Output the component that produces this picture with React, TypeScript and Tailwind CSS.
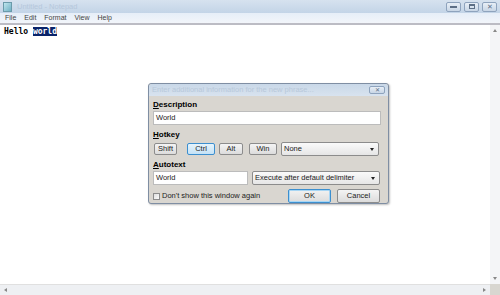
import React from "react";

const f = { fontFamily: '"Liberation Sans", Arial, sans-serif' };

function WinBtn({ children }: { children: React.ReactNode }) {
  return (
    <div className="w-[15px] h-[10px] border border-[#8ea3bd] rounded-[2px] bg-gradient-to-b from-[#e8eff7] to-[#c8d6e6] flex items-center justify-center">
      {children}
    </div>
  );
}

function Btn({ label, active, w }: { label: string; active?: boolean; w: string }) {
  return (
    <div
      className={`${w} h-[12px] rounded-[2px] border flex items-center justify-center text-[7.5px] text-[#222] ${
        active
          ? "border-[#3c8fcf] bg-gradient-to-b from-[#e6f3fb] to-[#c4e2f6]"
          : "border-[#8c8c8c] bg-gradient-to-b from-[#f4f4f4] to-[#dcdcdc]"
      }`}
    >
      {label}
    </div>
  );
}

function Select({ label, w }: { label: string; w: string }) {
  return (
    <div className={`${w} h-[14px] border border-[#8c8c8c] rounded-[2px] bg-gradient-to-b from-[#fafafa] to-[#e6e6e6] flex items-center justify-between px-[2px] text-[7.5px] text-[#222]`}>
      <span>{label}</span>
      <span className="w-0 h-0 border-l-[2.5px] border-r-[2.5px] border-t-[3px] border-l-transparent border-r-transparent border-t-[#222] mr-[2px]" />
    </div>
  );
}

export default function App() {
  return (
    <div className="w-[500px] h-[295px] relative overflow-hidden bg-white flex flex-col" style={f}>
      {/* Title bar */}
      <div className="h-[13px] bg-gradient-to-b from-[#d6e2ef] to-[#c3d4e7] flex items-center px-[3px]">
        <div className="w-[9px] h-[10px] bg-gradient-to-br from-[#bfe6ee] to-[#6fb1c4] border border-[#6a9aaa] mr-[5px]" />
        <span className="text-[7.5px] text-[#b5c7db]">Untitled - Notepad</span>
        <div className="ml-auto flex gap-[3px] mr-[0px]">
          <WinBtn><div className="w-[7px] h-[2px] border border-[#5d6f86]" /></WinBtn>
          <WinBtn><div className="w-[6px] h-[5px] border border-[#5d6f86] border-t-2" /></WinBtn>
          <WinBtn><span className="text-[7px] leading-none text-[#5d6f86]">✕</span></WinBtn>
        </div>
      </div>
      {/* Menu bar */}
      <div className="h-[12px] bg-gradient-to-b from-[#e6eef8] to-[#f2f5fa] flex items-center gap-[8px] px-[5px] text-[7px] text-[#444] border-b-2 border-[#bcbcc4]">
        <span>File</span>
        <span>Edit</span>
        <span>Format</span>
        <span>View</span>
        <span>Help</span>
      </div>
      {/* Text area */}
      <div className="flex-1 flex">
        <div className="flex-1 flex flex-col">
          <div className="flex-1 pl-[4px] pt-[1px] text-[8px] font-bold text-black" style={{ fontFamily: '"DejaVu Sans Mono", monospace' }}>
            Hello <span className="bg-[#0a246a] text-white">world</span>
          </div>
          <div className="h-[11px] bg-[#eef0f3] border-t border-[#e0e0e0] flex items-center justify-between px-[4px]">
            <span className="w-0 h-0 border-t-[2.5px] border-b-[2.5px] border-r-[3px] border-t-transparent border-b-transparent border-r-[#888]" />
            <span className="w-0 h-0 border-t-[2.5px] border-b-[2.5px] border-l-[3px] border-t-transparent border-b-transparent border-l-[#888]" />
          </div>
        </div>
        <div className="w-[10px] flex flex-col bg-[#f4f5f7]">
          <div className="flex-1 flex flex-col justify-between items-center py-[4px]">
            <span className="w-0 h-0 border-l-[2.5px] border-r-[2.5px] border-b-[3px] border-l-transparent border-r-transparent border-b-[#888]" />
            <span className="w-0 h-0 border-l-[2.5px] border-r-[2.5px] border-t-[3px] border-l-transparent border-r-transparent border-t-[#888]" />
          </div>
          <div className="h-[11px] bg-[#d8d6d0]" />
        </div>
      </div>

      {/* Dialog */}
      <div className="absolute left-[148px] top-[83px] w-[241px] h-[121px] border border-[#7f8ea3] rounded-[3px] bg-[#d9d6d0] flex flex-col shadow-[1px_1px_2px_rgba(0,0,0,0.25)]">
        <div className="h-[12px] bg-gradient-to-b from-[#c9d8e8] to-[#d8e3ef] flex items-center px-[3px] rounded-t-[3px]">
          <span className="text-[7.5px] text-[#b8c8da]">Enter additional information for the new phrase...</span>
          <div className="ml-auto w-[16px] h-[8px] border border-[#8ea3bd] rounded-[2px] bg-gradient-to-b from-[#e8eff7] to-[#c8d6e6] flex items-center justify-center">
            <span className="text-[6px] leading-none text-[#5d6f86]">✕</span>
          </div>
        </div>
        <div className="flex-1 flex flex-col px-[4px] pt-[3px] text-[7.5px] text-[#222]">
          <div className="font-bold text-[8px] h-[11px] text-black"><u>D</u>escription</div>
          <div className="h-[14px] w-[228px] bg-white border border-[#bcbcbc] flex items-center px-[2px] mt-[1px]">World</div>
          <div className="font-bold text-[8px] h-[11px] mt-[4px] text-black"><u>H</u>otkey</div>
          <div className="flex items-center mt-[2px]">
            <Btn label="Shift" w="w-[23px] ml-[1px]" />
            <Btn label="Ctrl" w="w-[28px] ml-[10px]" active />
            <Btn label="Alt" w="w-[24px] ml-[4px]" />
            <Btn label="Win" w="w-[28px] ml-[6px]" />
            <Select label="None" w="w-[98px] ml-[4px]" />
          </div>
          <div className="font-bold text-[8px] h-[11px] mt-[3px] text-black"><u>A</u>utotext</div>
          <div className="flex items-center gap-[4px] mt-[1px]">
            <div className="h-[14px] w-[95px] bg-white border border-[#bcbcbc] flex items-center px-[2px]">World</div>
            <Select label="Execute after default delimiter" w="w-[128px]" />
          </div>
          <div className="flex items-center mt-[4px]">
            <div className="w-[7px] h-[7px] border border-[#8c8c8c] bg-gradient-to-br from-[#e0e0e0] to-[#fafafa] mr-[2px]" />
            <span>Don't show this window again</span>
            <div className="ml-auto flex gap-[6px] mr-[4px]">
              <div className="w-[43px] h-[14px] rounded-[2px] border border-[#3c8fcf] bg-gradient-to-b from-[#f2f2f2] to-[#dcdcdc] shadow-[inset_0_0_0_1px_#a8d6f4] flex items-center justify-center">OK</div>
              <div className="w-[43px] h-[14px] rounded-[2px] border border-[#8c8c8c] bg-gradient-to-b from-[#f4f4f4] to-[#dcdcdc] flex items-center justify-center">Cancel</div>
            </div>
          </div>
        </div>
      </div>
    </div>
  );
}
